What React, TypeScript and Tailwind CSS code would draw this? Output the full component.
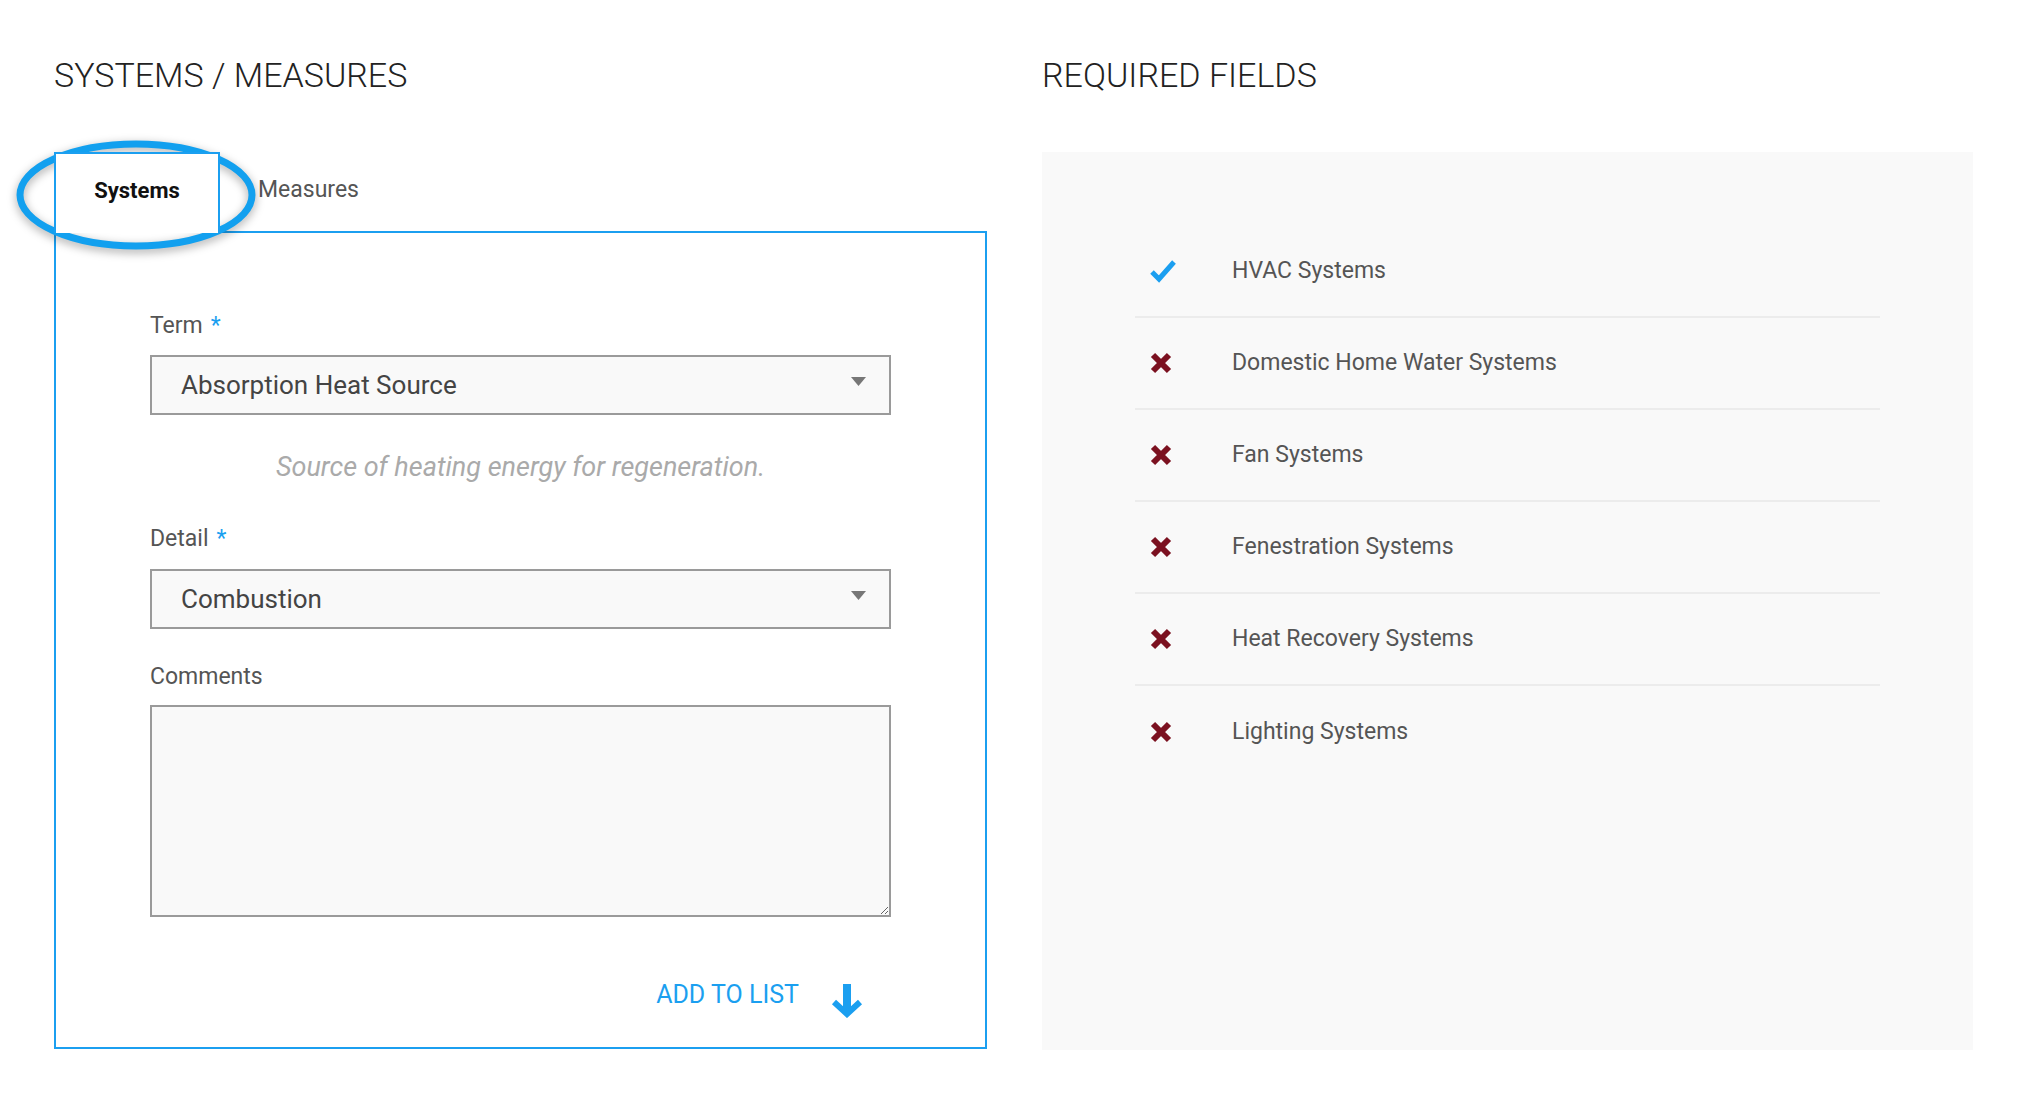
import React from "react";

const BLUE = "#1b9ff0";

type Field = { name: string; done: boolean };

const fields: Field[] = [
  { name: "HVAC Systems", done: true },
  { name: "Domestic Home Water Systems", done: false },
  { name: "Fan Systems", done: false },
  { name: "Fenestration Systems", done: false },
  { name: "Heat Recovery Systems", done: false },
  { name: "Lighting Systems", done: false },
];

function CheckIcon() {
  return (
    <svg width="28" height="24" viewBox="0 0 28 24" fill="none">
      <path d="M3 13 L10 20 L25 3" stroke={BLUE} strokeWidth="5" strokeLinejoin="miter" />
    </svg>
  );
}

function CrossIcon() {
  return (
    <svg width="24" height="24" viewBox="0 0 24 24" fill="none">
      <path d="M4 4 L20 20 M20 4 L4 20" stroke="#7b1120" strokeWidth="6" />
    </svg>
  );
}

function Caret() {
  return (
    <svg width="15" height="9" viewBox="0 0 15 9">
      <path d="M0 0 H15 L7.5 9 Z" fill="#777" />
    </svg>
  );
}

function DownArrow() {
  return (
    <svg width="32" height="34" viewBox="0 0 32 34" fill="none">
      <path d="M16 0 V30" stroke={BLUE} strokeWidth="8" />
      <path d="M3 18 L16 30 L29 18" stroke={BLUE} strokeWidth="6" />
    </svg>
  );
}

function Label({ text, required }: { text: string; required?: boolean }) {
  return (
    <div className="text-[23px] leading-[28px] text-[#555]">
      {text}
      {required ? <span className="ml-2 text-[#1b9ff0]">*</span> : null}
    </div>
  );
}

function Select({ value }: { value: string }) {
  return (
    <div className="flex h-[60px] items-center justify-between border-2 border-[#9a9a9a] bg-[#f9f9f9] pl-[29px] pr-[23px]">
      <span className="text-[26px] text-[#444]">{value}</span>
      <span className="-mt-[8px]">
        <Caret />
      </span>
    </div>
  );
}

export default function App() {
  return (
    <div
      className="relative min-h-screen bg-white"
      style={{ fontFamily: "Roboto, 'Liberation Sans', sans-serif" }}
    >
      <div className="flex gap-[55px] pl-[54px] pt-[53px]">
        {/* left column */}
        <section className="w-[933px]">
          <h1 className="text-[34px] font-light leading-[44px] text-[#222]">SYSTEMS / MEASURES</h1>

          <div className="mt-[55px] flex h-[79px] items-start">
            <button
              type="button"
              className="relative z-10 flex h-[81px] w-[166px] items-center justify-center border-2 border-b-0 border-[#1b9ff0] bg-white pb-[6px] text-[22px] font-bold text-[#111]"
            >
              Systems
            </button>
            <button type="button" className="flex h-[79px] items-center pb-[2px] pl-[38px] text-[23px] text-[#555]">
              Measures
            </button>
          </div>

          <div className="h-[818px] border-2 border-[#1b9ff0] px-[94px] pt-[79px]">
            <Label text="Term" required />
            <div className="mt-[15px]">
              <Select value="Absorption Heat Source" />
            </div>
            <p className="mt-[37px] text-center text-[27px] italic leading-[30px] text-[#aaa]">
              Source of heating energy for regeneration.
            </p>

            <div className="mt-[43px]">
              <Label text="Detail" required />
            </div>
            <div className="mt-[16px]">
              <Select value="Combustion" />
            </div>

            <div className="mt-[34px]">
              <Label text="Comments" />
            </div>
            <textarea className="mt-[14px] block h-[212px] w-full border-2 border-[#9a9a9a] bg-[#f9f9f9] outline-none" />

            <div className="mt-[55px] flex items-center justify-end gap-[32px] pr-[28px]">
              <span className="text-[25px] leading-[30px] text-[#1b9ff0]">ADD TO LIST</span>
              <span className="mt-[12px]">
                <DownArrow />
              </span>
            </div>
          </div>
        </section>

        {/* right column */}
        <section className="w-[931px]">
          <h1 className="text-[34px] font-light leading-[44px] text-[#222]">REQUIRED FIELDS</h1>
          <div className="mt-[55px] h-[898px] bg-[#f9f9f9] px-[93px] pt-[74px]">
            <ul>
              {fields.map((f, i) => (
                <li
                  key={f.name}
                  className={`flex h-[92px] items-center ${i < fields.length - 1 ? "border-b-2 border-[#ececec]" : ""}`}
                >
                  <span className="flex w-[97px] items-center pl-[14px]">
                    {f.done ? <CheckIcon /> : <CrossIcon />}
                  </span>
                  <span className="text-[23px] text-[#555]">{f.name}</span>
                </li>
              ))}
            </ul>
          </div>
        </section>
      </div>

      {/* annotation ring around the active tab */}
      <svg
        className="pointer-events-none absolute left-[12px] top-[135px] drop-shadow-[0_3px_5px_rgba(0,0,0,0.35)]"
        width="250"
        height="124"
        viewBox="0 0 250 124"
        fill="none"
      >
        <ellipse cx="124" cy="60" rx="116" ry="51" stroke="#12a0ef" strokeWidth="7" />
      </svg>
    </div>
  );
}
